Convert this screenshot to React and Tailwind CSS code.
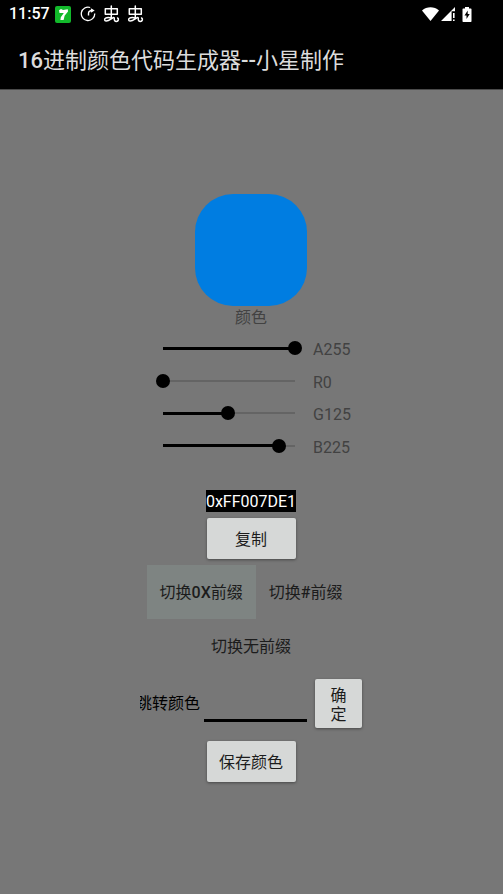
import { useState } from 'react';

const hex = (n) => n.toString(16).toUpperCase().padStart(2, '0');

function BugIcon() {
  return (
    <svg viewBox="0 0 17 18" className="h-[18px] w-[17px]" fill="none" stroke="white" strokeWidth="1.5" strokeLinecap="round" strokeLinejoin="round" aria-hidden="true">
      <path d="M8.300 1v12" />
      <path d="M2.300 3.800h12v5.400h-12z" />
      <path d="M8.300 13c-1.800-.6-4.200-.7-5.700.1-1.400.8-1.300 2.800.5 2.900 2.400.1 4.400-1.800 6.600-3.200 1-.6 1.800 0 1.600 1-.2 1.500.6 2.600 2.100 2.600 2.100 0 2.700-2.500 1.200-3.400" />
    </svg>
  );
}

function StatusBar() {
  return (
    <div className="flex h-7 items-center justify-between pr-[31px] pl-[9px]">
      <div className="flex items-center">
        <span className="w-[46px] text-base font-medium">11:57</span>
        <svg viewBox="0 0 16 17" className="h-[17px] w-4" aria-hidden="true">
          <rect width="16" height="17" rx="2" fill="#12b92b" />
          <path d="M4 4.300 6 3l2 1 4.800-.8.2 2.300-3.400 4.300-1 4.200H5.400l.4-2.700 3-4.300L4.500 7z" fill="white" />
        </svg>
        <svg viewBox="0 0 16 16" className="ml-[9px] size-4" fill="none" stroke="white" aria-hidden="true">
          <path d="M10.200 1.500A6.700 6.700 0 1 0 14.700 7.500" strokeWidth="1.300" />
          <path d="M8.500 9.500V7.500c0-2 1.200-3 3.900-3" strokeWidth="1.400" />
          <path d="m10.900 2.300 3.800 2.200-3.800 2.200z" fill="white" stroke="none" />
        </svg>
        <span className="ml-[7px] flex gap-[7px]">
          <BugIcon />
          <BugIcon />
        </span>
      </div>
      <div className="flex items-center">
        <svg viewBox="0 0 17 14" className="h-[14px] w-[17px]" fill="white" aria-hidden="true">
          <path d="M0 3.500C4.800-.8 12.200-.8 17 3.500L8.500 14z" />
        </svg>
        <svg viewBox="0 0 15 15" className="ml-[2px] size-[15px]" fill="white" aria-hidden="true">
          <path d="M14 0v4.200h-3.400V14H0z" />
          <path d="M12 6h1.600v5H12zM12 12.400h1.600V14H12z" />
        </svg>
        <svg viewBox="0 0 10 15" className="ml-[6px] h-[15px] w-[10px]" aria-hidden="true">
          <path d="M3 0h4v1.500h1.800q.7 0 .7.800v11.900q0 .8-.7.800H1.200q-.7 0-.7-.8V2.300q0-.8.7-.8H3z" fill="white" />
          <path d="M5.700 3.500 2.500 8.500h2v3.500l3.200-5h-2z" fill="black" />
        </svg>
      </div>
    </div>
  );
}

function ChannelSlider({ name, value, onChange }) {
  return (
    <div className="flex items-center gap-[11px]">
      <div className="grid w-[146px] items-center">
        <div className="col-start-1 row-start-1 mx-[7px] flex h-[3px] items-center">
          <div className="h-[3px] bg-black" style={{ width: `${(value / 255) * 100}%` }} />
          <div className="h-[2px] flex-1 bg-[#646464]" />
        </div>
        <input
          id={`channel-${name}`}
          type="range"
          min="0"
          max="255"
          value={value}
          onChange={(e) => onChange(Number(e.target.value))}
          className="z-10 col-start-1 row-start-1 m-0 h-[14px] w-full appearance-none bg-transparent [&::-webkit-slider-thumb]:size-[14px] [&::-webkit-slider-thumb]:appearance-none [&::-webkit-slider-thumb]:rounded-full [&::-webkit-slider-thumb]:bg-black"
        />
      </div>
      <label htmlFor={`channel-${name}`} className="w-[37px] pt-1 text-base whitespace-nowrap text-[#424242]">
        {name}
        {value}
      </label>
    </div>
  );
}

function RaisedButton({ className, ...props }) {
  return (
    <button
      type="button"
      className={`rounded-xs bg-[#d6d8d7] pt-[2px] text-base text-[#1c1c1c] shadow-[0_1px_3px_rgba(0,0,0,0.4)] ${className}`}
      {...props}
    />
  );
}

function PrefixButton({ active, children, ...props }) {
  return (
    <button
      type="button"
      aria-pressed={active}
      className={`h-[54px] px-[13px] pt-[2px] text-base text-[#1c1c1c] ${active ? 'bg-[#7e8482]' : 'bg-transparent'}`}
      {...props}
    >
      {children}
    </button>
  );
}

export default function App() {
  const [color, setColor] = useState({ A: 255, R: 0, G: 125, B: 225 });
  const [prefix, setPrefix] = useState('0x');
  const [target, setTarget] = useState('');
  const { A, R, G, B } = color;
  const code = prefix + [A, R, G, B].map(hex).join('');

  const jump = () => {
    const digits = target.replace(/^(0x|#)/i, '').padStart(8, 'F');
    if (/^[0-9a-f]{8}$/i.test(digits)) {
      const [a, r, g, b] = digits.match(/../g).map((d) => parseInt(d, 16));
      setColor({ A: a, R: r, G: g, B: b });
    }
  };

  return (
    <div className="flex min-h-screen flex-col bg-[#777777] font-[Roboto,'Noto_Sans_CJK_SC',sans-serif]">
      <header className="border-b border-[#4a4a4a] bg-black text-white">
        <StatusBar />
        <h1 className="flex h-[61px] items-center px-[18px] pt-[3px] text-[22px] text-[#dcdcdc]">
          <span className="font-medium">16</span>进制颜色代码生成器<span className="font-medium">--</span>小星制作
        </h1>
      </header>
      <main className="flex flex-1 flex-col items-center pt-[104px] pr-px pb-8">
        <div className="size-28 rounded-[38px]" style={{ backgroundColor: `rgba(${R},${G},${B},${A / 255})` }} />
        <p className="h-[26px] text-base leading-6 text-[#424242]">颜色</p>
        <div className="grid h-[130px] grid-rows-4 pl-1">
          {['A', 'R', 'G', 'B'].map((name) => (
            <ChannelSlider key={name} name={name} value={color[name]} onChange={(v) => setColor({ ...color, [name]: v })} />
          ))}
        </div>
        <output className="mt-7 h-[22px] bg-black text-base leading-6 text-white">{code}</output>
        <RaisedButton className="mt-[6px] h-[41px] w-[89px]" onClick={() => navigator.clipboard?.writeText(code)}>
          复制
        </RaisedButton>
        <div className="mt-[6px] flex">
          <PrefixButton active={prefix === '0x'} onClick={() => setPrefix('0x')}>
            切换<span className="font-medium">0X</span>前缀
          </PrefixButton>
          <PrefixButton active={prefix === '#'} onClick={() => setPrefix('#')}>
            切换<span className="font-medium">#</span>前缀
          </PrefixButton>
        </div>
        <PrefixButton active={prefix === ''} onClick={() => setPrefix('')}>切换无前缀</PrefixButton>
        <div className="mt-[6px] flex items-center">
          <label htmlFor="target" className="flex w-[60px] justify-end overflow-hidden text-base whitespace-nowrap text-black">
            跳转颜色
          </label>
          <input
            id="target"
            value={target}
            onChange={(e) => setTarget(e.target.value)}
            className="ml-1 h-9 w-[103px] border-b-[3px] border-black bg-transparent text-base outline-none"
          />
          <RaisedButton className="ml-2 h-[49px] w-[47px] px-3 leading-[19px]" onClick={jump}>
            确定
          </RaisedButton>
        </div>
        <RaisedButton className="mt-[13px] h-[41px] w-[89px]">保存颜色</RaisedButton>
      </main>
    </div>
  );
}
